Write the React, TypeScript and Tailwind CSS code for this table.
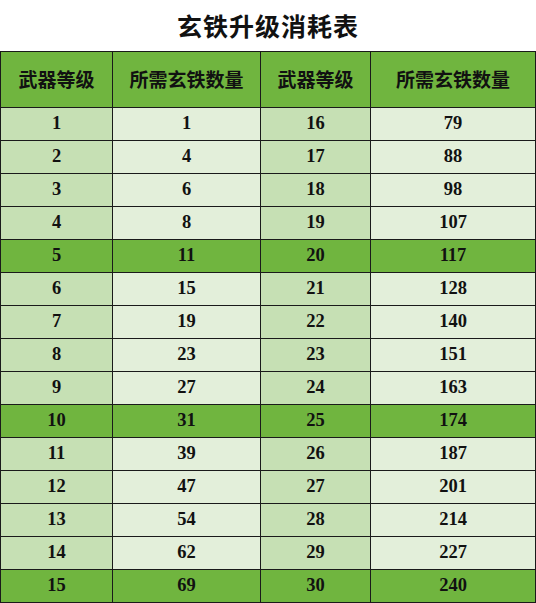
const rows: [number, number, number, number][] = [
  [1, 1, 16, 79],
  [2, 4, 17, 88],
  [3, 6, 18, 98],
  [4, 8, 19, 107],
  [5, 11, 20, 117],
  [6, 15, 21, 128],
  [7, 19, 22, 140],
  [8, 23, 23, 151],
  [9, 27, 24, 163],
  [10, 31, 25, 174],
  [11, 39, 26, 187],
  [12, 47, 27, 201],
  [13, 54, 28, 214],
  [14, 62, 29, 227],
  [15, 69, 30, 240],
];

const App = () => {
  return (
    <div className="w-[536px] h-[603px] bg-white overflow-hidden">
      <div className="h-[51px] flex items-center justify-center text-[25px] font-bold text-[#111] font-['Noto_Sans_CJK_SC',sans-serif] tracking-[1px]">
        玄铁升级消耗表
      </div>
      <table className="border-collapse table-fixed w-[535px] text-[#111]">
        <colgroup>
          <col className="w-[112px]" />
          <col className="w-[148px]" />
          <col className="w-[110px]" />
          <col className="w-[165px]" />
        </colgroup>
        <thead>
          <tr className="h-[56px] bg-[#70b53f] font-['Noto_Sans_CJK_SC',sans-serif] text-[19px] font-bold">
            <th className="border border-[#1a1a1a] font-bold">武器等级</th>
            <th className="border border-[#1a1a1a] font-bold">所需玄铁数量</th>
            <th className="border border-[#1a1a1a] font-bold">武器等级</th>
            <th className="border border-[#1a1a1a] font-bold">所需玄铁数量</th>
          </tr>
        </thead>
        <tbody className="font-['Liberation_Serif',serif] font-bold text-[18.5px]">
          {rows.map((r) => {
            const hl = r[0] % 5 === 0;
            return (
              <tr key={r[0]} className="h-[33px]">
                <td className={`border border-[#1a1a1a] text-center ${hl ? "bg-[#70b53f]" : "bg-[#c6e0b4]"}`}>{r[0]}</td>
                <td className={`border border-[#1a1a1a] text-center ${hl ? "bg-[#70b53f]" : "bg-[#e3efda]"}`}>{r[1]}</td>
                <td className={`border border-[#1a1a1a] text-center ${hl ? "bg-[#70b53f]" : "bg-[#c6e0b4]"}`}>{r[2]}</td>
                <td className={`border border-[#1a1a1a] text-center ${hl ? "bg-[#70b53f]" : "bg-[#e3efda]"}`}>{r[3]}</td>
              </tr>
            );
          })}
        </tbody>
      </table>
    </div>
  );
};

export default App;
